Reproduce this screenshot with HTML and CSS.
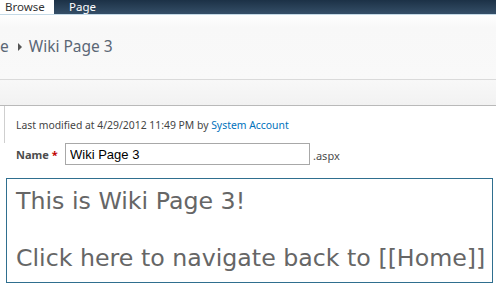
FILE: index.html
```html
<!DOCTYPE html>
<html>
<head>
<meta charset="utf-8" />
<title>Wiki Page 3</title>
<link rel="stylesheet" href="styles.css">
</head>
<body>
<div class="ribbon">
  <span class="tab active">Browse</span>
  <span class="tab">Page</span>
</div>
<div class="titlearea">
  <div class="crumbs">
    <span>e</span>
    <span class="arrow"></span>
    <span class="current">Wiki Page 3</span>
  </div>
</div>
<div class="toolbar"></div>
<div class="content">
  <div class="meta">Last modified at 4/29/2012 11:49 PM by <a href="#">System Account</a></div>
  <div class="namerow">
    <label>Name <span class="req">*</span></label>
    <input type="text" value="Wiki Page 3" />
    <span class="ext">.aspx</span>
  </div>
  <div class="editor">
    <p>This is Wiki Page 3!</p>
    <p>&nbsp;</p>
    <p>Click here to navigate back to [[Home]]</p>
  </div>
</div>
</body>
</html>
```

FILE: styles.css
```css
* {
  font-family: 'Noto Sans', sans-serif;
  box-sizing: border-box;
}
html, body {
  margin: 0;
  background: #fff;
  overflow: hidden;
}
.ribbon {
  height: 14px;
  display: flex;
  background: linear-gradient(#1c3146, #354f68);
  border-bottom: 1px solid #c4d9e6;
  box-sizing: content-box;
}
.tab {
  font-size: 11.5px;
  line-height: 14px;
  color: #fff;
  padding: 0 14px 0 15px;
}
.tab.active {
  background: #fff;
  color: #333;
  padding: 0 11px 0 5px;
  width: 54px;
}
.titlearea {
  height: 64px;
  background: linear-gradient(#fefefe, #f8f8f8 12px, #f9f9f9);
  border-bottom: 1px solid #dadada;
  box-sizing: content-box;
  display: flex;
  align-items: center;
}
.crumbs {
  display: flex;
  align-items: center;
  font-size: 15.5px;
  color: #5b6776;
  margin-top: -2px;
}
.arrow {
  width: 0;
  height: 0;
  border-left: 4px solid #555;
  border-top: 4px solid transparent;
  border-bottom: 4px solid transparent;
  margin: 2px 7px 0 9px;
}
.toolbar {
  height: 25px;
  background: linear-gradient(#f8f8f8, #f2f2f2);
  border-bottom: 1px solid #b9b9b9;
  box-sizing: content-box;
}
.meta {
  margin-left: 4px;
  border-left: 1px solid #cfcfcf;
  padding: 12px 0 4px 11px;
  height: 37px;
  font-size: 10.4px;
  line-height: 14px;
  color: #444;
}
.meta a {
  color: #0072bc;
  text-decoration: none;
}
.namerow {
  display: flex;
  align-items: center;
  height: 22px;
  padding-left: 16px;
  font-size: 11px;
  color: #4c4c4c;
}
.namerow label {
  font-weight: bold;
  width: 49px;
}
.req {
  color: #bf0000;
}
.namerow input {
  width: 245px;
  height: 22px;
  border: 1px solid #a8a8a8;
  font-family: 'Liberation Sans', Arial, sans-serif;
  font-size: 13px;
  color: #000;
  padding: 0 4px;
  margin: 0 3px 0 0;
  outline: none;
}
.ext {
  margin-top: 2px;
}
.editor {
  margin: 13px 3px 0 6px;
  border: 1px solid #2f6f8f;
  padding: 8px 8px 8px 9px;
  height: 105px;
}
.editor p {
  margin: 0;
  font-family: 'DejaVu Sans', Verdana, sans-serif;
  font-size: 23.7px;
  line-height: 28.5px;
  color: #666;
  white-space: nowrap;
}
```
